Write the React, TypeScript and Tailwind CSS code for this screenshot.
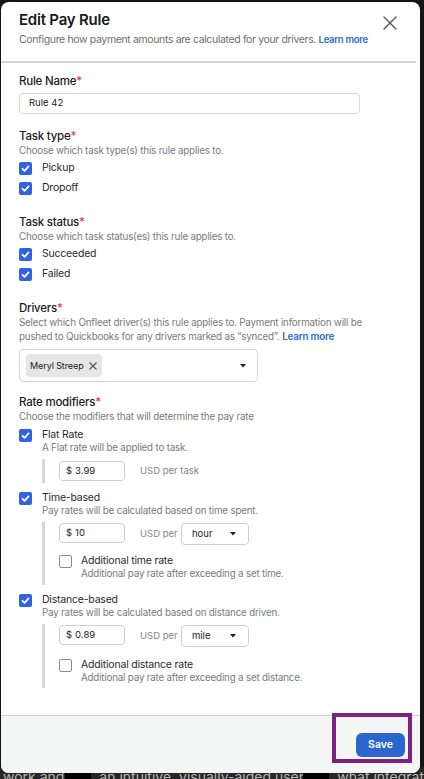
import React from "react";

const Check = ({ checked }: { checked: boolean }) =>
  checked ? (
    <span className="w-[13px] h-[13px] rounded-[2px] bg-[#2f62e6] flex items-center justify-center shrink-0">
      <svg width="9" height="9" viewBox="0 0 10 10">
        <path d="M1.6 5.3 L4 7.6 L8.4 2.6" stroke="white" strokeWidth="1.9" fill="none" strokeLinecap="round" strokeLinejoin="round" />
      </svg>
    </span>
  ) : (
    <span className="w-[13px] h-[13px] rounded-[2px] border border-[#8c8c8c] bg-white shrink-0" />
  );

const Caret = () => (
  <svg width="6" height="4" viewBox="0 0 6 4" className="shrink-0">
    <path d="M0 0 L6 0 L3 3.5 Z" fill="#222" />
  </svg>
);

const Label = ({ children, className = "" }: { children: React.ReactNode; className?: string }) => (
  <div className={`text-[11.5px] tracking-[-0.02em] leading-[16px] font-medium text-[#1c1c1c] ${className}`}>
    {children}
    <span className="text-[#e5383b]">*</span>
  </div>
);

const Desc = ({ children, className = "" }: { children: React.ReactNode; className?: string }) => (
  <div className={`text-[9.8px] tracking-[-0.02em] leading-[14px] text-[#7a7a7a] ${className}`}>{children}</div>
);

const CheckRow = ({ label }: { label: string }) => (
  <div className="flex items-center h-[20px] gap-[10px]">
    <Check checked />
    <span className="text-[10.5px] tracking-[-0.02em] text-[#2a2a2a]">{label}</span>
  </div>
);

const MoneyInput = ({ value }: { value: string }) => (
  <div className="w-[66px] h-[20px] border border-[#cfcfcf] rounded-[4px] flex items-center pl-[6px] text-[9.5px] text-[#222] gap-[3px]">
    <span>$</span>
    <span>{value}</span>
  </div>
);

const UnitSelect = ({ value }: { value: string }) => (
  <div className="w-[68px] h-[22px] border border-[#cfcfcf] rounded-[4px] flex items-center justify-between pl-[10px] pr-[12px] text-[9.5px] text-[#222]">
    <span>{value}</span>
    <Caret />
  </div>
);

const Modifier = ({
  title,
  desc,
  children,
}: {
  title: string;
  desc: string;
  children: React.ReactNode;
}) => (
  <div>
    <div className="flex items-center h-[14px] gap-[10px]">
      <Check checked />
      <span className="text-[10.5px] tracking-[-0.02em] leading-[14px] text-[#2a2a2a]">{title}</span>
    </div>
    <div className="pl-[23px] text-[9.8px] tracking-[-0.02em] leading-[12px] text-[#7a7a7a]">{desc}</div>
    <div className="ml-[23px] mt-[5px] border-l-[3px] border-[#d6d6d6] pl-[14px]">{children}</div>
  </div>
);

const Additional = ({ title, desc, className = "mt-[9px]" }: { title: string; desc: string; className?: string }) => (
  <div className={className}>
    <div className="flex items-center h-[14px] gap-[9px]">
      <Check checked={false} />
      <span className="text-[10.5px] tracking-[-0.02em] leading-[14px] text-[#2a2a2a]">{title}</span>
    </div>
    <div className="pl-[22px] text-[9.8px] tracking-[-0.02em] leading-[12px] text-[#7a7a7a]">{desc}</div>
  </div>
);

const RateRow = ({ value, unit }: { value: string; unit: string }) => (
  <div className="flex items-start">
    <MoneyInput value={value} />
    <span className="ml-[15px] mr-[4px] w-[37px] h-[22px] flex items-center text-[9.5px] text-[#858585] whitespace-nowrap">
      USD per
    </span>
    <UnitSelect value={unit} />
  </div>
);

export default function App() {
  return (
    <div
      className="relative w-[424px] h-[779px] overflow-hidden bg-[#151515]"
      style={{ fontFamily: "Inter, 'Noto Sans', sans-serif" }}
    >
      {/* backdrop page text */}
      <div className="absolute left-0 top-[767px] w-[424px] h-[20px] flex text-[14px] leading-[20px] text-[#b8b8b8] bg-[#262626]">
        <span className="pl-[3px] w-[75px] whitespace-nowrap">work and</span>
        <span className="w-[30px] bg-black" />
        <span className="pl-[8px] w-[212px] whitespace-nowrap">an intuitive, visually-aided user</span>
        <span className="w-[30px] bg-black" />
        <span className="pl-[8px] whitespace-nowrap">what integrat</span>
      </div>

      {/* modal */}
      <div className="absolute left-[1px] top-[2px] w-[419px] h-[771px] bg-white rounded-[8px] flex flex-col overflow-hidden">
        {/* header */}
        <div className="relative pl-[18px] pr-[20px] pt-[8px] pb-[14px]">
          <div className="text-[15px] tracking-[-0.015em] leading-[20px] font-semibold text-[#1a1a1a]">Edit Pay Rule</div>
          <div className="mt-[3px] text-[10.5px] tracking-[-0.035em] leading-[14px] text-[#6f6f6f] whitespace-nowrap">
            Configure how payment amounts are calculated for your drivers.{" "}
            <span className="text-[9.5px] tracking-[-0.03em] font-semibold text-[#2b6bd3]">Learn more</span>
          </div>
          <svg className="absolute left-[382px] top-[14px]" width="14" height="14" viewBox="0 0 14 14">
            <path d="M1 1 L13 13 M13 1 L1 13" stroke="#555" strokeWidth="1.4" strokeLinecap="round" />
          </svg>
        </div>
        <div className="h-[2px] bg-[#d4d4d9] mr-[4px]" />

        {/* body */}
        <div className="flex-1 pl-[18px] pr-[20px] pt-[10px]">
          <Label>Rule Name</Label>
          <div className="mt-[4px] w-[341px] h-[21px] border border-[#d6d6d6] rounded-[4px] flex items-center pl-[9px] text-[9.5px] text-[#222]">
            Rule 42
          </div>

          <Label className="mt-[14px]">Task type</Label>
          <Desc>Choose which task type(s) this rule applies to.</Desc>
          <CheckRow label="Pickup" />
          <CheckRow label="Dropoff" />

          <Label className="mt-[16px]">Task status</Label>
          <Desc>Choose which task status(es) this rule applies to.</Desc>
          <CheckRow label="Succeeded" />
          <CheckRow label="Failed" />

          <Label className="mt-[16px]">Drivers</Label>
          <Desc>
            Select which Onfleet driver(s) this rule applies to. Payment information will be
            <br />
            pushed to Quickbooks for any drivers marked as “synced”.{" "}
            <span className="font-semibold text-[#2b6bd3]">Learn more</span>
          </Desc>
          <div className="mt-[5px] w-[239px] h-[33px] border border-[#d6d6d6] rounded-[4px] flex items-center justify-between pl-[6px] pr-[11px]">
            <div className="h-[23px] bg-[#e6e6e6] rounded-[4px] flex items-center pl-[4px] pr-[5px] gap-[5px] text-[9px] tracking-[-0.01em] text-[#222]">
              <span>Meryl Streep</span>
              <svg width="8" height="8" viewBox="0 0 8 8">
                <path d="M0.5 0.5 L7.5 7.5 M7.5 0.5 L0.5 7.5" stroke="#555" strokeWidth="1.1" />
              </svg>
            </div>
            <Caret />
          </div>

          <Label className="mt-[12px]">Rate modifiers</Label>
          <Desc>Choose the modifiers that will determine the pay rate</Desc>

          <div className="mt-[4px] flex flex-col gap-[8px]">
            <Modifier title="Flat Rate" desc="A Flat rate will be applied to task.">
              <div className="py-[2px] flex items-center gap-[15px]">
                <MoneyInput value="3.99" />
                <span className="text-[9.5px] text-[#858585]">USD per task</span>
              </div>
            </Modifier>

            <Modifier title="Time-based" desc="Pay rates will be calculated based on time spent.">
              <div className="pt-[1px] pb-[5px]">
                <RateRow value="10" unit="hour" />
                <Additional title="Additional time rate" desc="Additional pay rate after exceeding a set time." />
              </div>
            </Modifier>

            <Modifier title="Distance-based" desc="Pay rates will be calculated based on distance driven.">
              <div className="pt-[1px] pb-[4px]">
                <RateRow value="0.89" unit="mile" />
                <Additional
                  className="mt-[11px]"
                  title="Additional distance rate"
                  desc="Additional pay rate after exceeding a set distance."
                />
              </div>
            </Modifier>
          </div>
        </div>

        {/* footer */}
        <div className="h-[58px] border-t border-[#d2d2d2] bg-[#f4f5f5] flex items-center justify-end pr-[15px]">
          <div className="w-[49px] h-[24px] rounded-[6px] bg-[#2a66cd] flex items-center justify-center text-[10.5px] font-semibold text-white">
            Save
          </div>
        </div>
      </div>

      {/* annotation highlight */}
      <div className="absolute left-[332px] top-[713px] w-[80px] h-[50px] border-[4px] border-[#7e2181]" />
    </div>
  );
}
